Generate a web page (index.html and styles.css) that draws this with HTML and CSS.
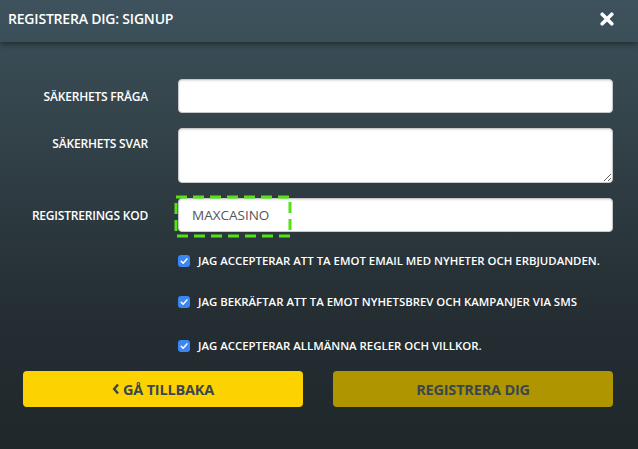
FILE: index.html
```html
<!DOCTYPE html>
<html lang="sv">
<head>
<meta charset="utf-8">
<title>Registrera dig</title>
<link rel="stylesheet" href="styles.css">
</head>
<body>
<div class="modal">
  <div class="header">
    <div class="title">REGISTRERA DIG: SIGNUP</div>
    <svg class="close" width="14" height="14" viewBox="0 0 14 14"><path d="M2.2 2.2 L11.8 11.8 M11.8 2.2 L2.2 11.8" stroke="#fff" stroke-width="3.6" stroke-linecap="round"/></svg>
  </div>
  <div class="form">
    <label class="lbl">SÄKERHETS FRÅGA</label>
    <input class="field" type="text">
    <label class="lbl lbl-top">SÄKERHETS SVAR</label>
    <textarea class="field area"></textarea>
    <label class="lbl">REGISTRERINGS KOD</label>
    <input class="field" type="text" value="MAXCASINO">
  </div>
  <div class="checks">
    <div class="check"><span class="box"><svg width="12" height="12" viewBox="0 0 12 12"><path d="M3.2 6.3 L5.1 8.2 L8.9 3.9" fill="none" stroke="#fff" stroke-width="1.5" stroke-linecap="round" stroke-linejoin="round"/></svg></span>JAG ACCEPTERAR ATT TA EMOT EMAIL MED NYHETER OCH ERBJUDANDEN.</div>
    <div class="check"><span class="box"><svg width="12" height="12" viewBox="0 0 12 12"><path d="M3.2 6.3 L5.1 8.2 L8.9 3.9" fill="none" stroke="#fff" stroke-width="1.5" stroke-linecap="round" stroke-linejoin="round"/></svg></span>JAG BEKRÄFTAR ATT TA EMOT NYHETSBREV OCH KAMPANJER VIA SMS</div>
    <div class="check check-last"><span class="box"><svg width="12" height="12" viewBox="0 0 12 12"><path d="M3.2 6.3 L5.1 8.2 L8.9 3.9" fill="none" stroke="#fff" stroke-width="1.5" stroke-linecap="round" stroke-linejoin="round"/></svg></span>JAG ACCEPTERAR ALLMÄNNA REGLER OCH VILLKOR.</div>
  </div>
  <div class="buttons">
    <button class="btn btn-back"><svg width="8" height="12" viewBox="0 0 8 12"><path d="M6 1.5 L2.2 6 L6 10.5" fill="none" stroke="#3a4750" stroke-width="2.5"/></svg>GÅ TILLBAKA</button>
    <button class="btn btn-reg">REGISTRERA DIG</button>
  </div>
  <svg class="highlight" width="118" height="43" viewBox="0 0 118 43"><rect x="2" y="2" width="114" height="39" fill="none" stroke="#52e312" stroke-width="3" stroke-dasharray="11 6"/></svg>
</div>
</body>
</html>
```
FILE: styles.css
```css
html, body {
  margin: 0;
  padding: 0;
}
body {
  width: 638px;
  height: 449px;
  overflow: hidden;
  font-family: "Open Sans", "DejaVu Sans", sans-serif;
  background: linear-gradient(to bottom, #3c505a 0px, #34444b 120px, #252f34 300px, #1f272a 449px);
}
.modal {
  position: relative;
  width: 638px;
  height: 449px;
}
.header {
  height: 42px;
  display: flex;
  align-items: center;
  justify-content: space-between;
  padding: 0 24px 0 8px;
  background: linear-gradient(to bottom, #3d525c, #3b4f59);
  box-shadow: 0 2px 6px rgba(0, 0, 0, 0.45);
  position: relative;
}
.title {
  color: #fff;
  font-size: 14px;
  font-weight: 600;
  letter-spacing: -0.2px;
  margin-top: -6px;
}
.close {
  display: block;
  margin-top: -5px;
}
.form {
  display: grid;
  grid-template-columns: 148px 435px;
  column-gap: 30px;
  row-gap: 15px;
  padding-top: 37px;
}
.lbl {
  color: #fff;
  font-size: 12px;
  font-weight: 600;
  text-align: right;
  align-self: center;
  letter-spacing: -0.2px;
}
.lbl-top {
  align-self: start;
  padding-top: 7px;
}
.field {
  box-sizing: border-box;
  height: 34px;
  margin: 0;
  border: 1px solid #c9c9c9;
  border-radius: 4px;
  background: #fff;
  box-shadow: inset 0 1px 2px rgba(0, 0, 0, 0.12);
  font-family: "Open Sans", "DejaVu Sans", sans-serif;
  font-size: 13.5px;
  color: #555;
  padding: 0 13px;
  outline: none;
}
.area {
  height: 55px;
  resize: vertical;
  display: block;
}
.checks {
  margin-top: 8px;
  padding-left: 178px;
}
.check {
  height: 41px;
  display: flex;
  align-items: center;
  color: #fff;
  font-size: 11.4px;
  font-weight: 600;
  letter-spacing: 0;
}
.check-last {
  height: 45px;
  padding-top: 2px;
  box-sizing: border-box;
}
.box {
  width: 12px;
  height: 12px;
  border-radius: 3px;
  background: #3b86f4;
  margin-right: 8px;
  display: flex;
  flex-shrink: 0;
}
.buttons {
  display: flex;
  gap: 30px;
  padding-left: 23px;
  margin-top: 4px;
}
.btn {
  width: 280px;
  height: 36px;
  border: none;
  border-radius: 4px;
  font-family: "Open Sans", "DejaVu Sans", sans-serif;
  font-size: 14.5px;
  font-weight: 700;
  color: #3a4750;
  letter-spacing: -0.2px;
  display: flex;
  align-items: center;
  justify-content: center;
  gap: 3px;
  padding: 0;
}
.btn-back {
  background: #fcd300;
}
.btn-reg {
  background: #af9500;
}
.highlight {
  position: absolute;
  left: 174px;
  top: 195px;
}
```
